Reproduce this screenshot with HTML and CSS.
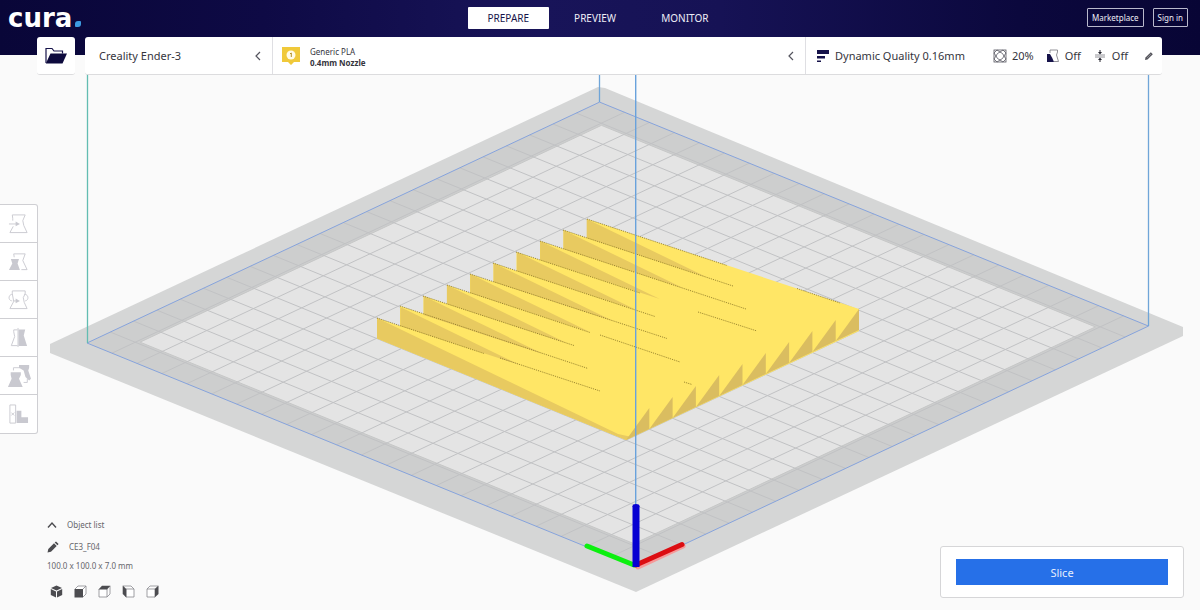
FILE: index.html
```html
<!DOCTYPE html>
<html lang="en">
<head>
<meta charset="utf-8">
<meta name="viewport" content="width=device-width, initial-scale=1">
<title>CE3_F04 - Cura</title>
<link rel="stylesheet" href="styles.css">
</head>
<body>
<div class="app">
  <svg class="scene" viewBox="0 0 1200 610" preserveAspectRatio="xMidYMid slice" role="img" aria-label="Build plate with model">
    <polygon points="598,87 605,88 1183,327 1183,336 636,592 50,353 50,344" fill="#d5d6d6"/>
    <!-- build plate: one unit is one 10 mm grid cell -->
    <g transform="matrix(24.95 10.18 23.3 -10.95 87 343)">
      <rect width="22" height="22" fill="#cdcece"/>
      <rect class="hair" x="1.1" y="1.1" width="19.8" height="19.8" fill="#e4e4e4" stroke="#c6c7c7"/>
      <path class="hair" stroke="#c1c2c4" fill="none" d="M0 1H22M0 2H22M0 3H22M0 4H22M0 5H22M0 6H22M0 7H22M0 8H22M0 9H22M0 10H22M0 11H22M0 12H22M0 13H22M0 14H22M0 15H22M0 16H22M0 17H22M0 18H22M0 19H22M0 20H22M0 21H22M1 0V22M2 0V22M3 0V22M4 0V22M5 0V22M6 0V22M7 0V22M8 0V22M9 0V22M10 0V22M11 0V22M12 0V22M13 0V22M14 0V22M15 0V22M16 0V22M17 0V22M18 0V22M19 0V22M20 0V22M21 0V22"/>
      <rect class="hair" width="22" height="22" fill="none" stroke="#86a3dc"/>
    </g>
    <path d="M87.500 60V343" stroke="#62bdb2" stroke-width="1.300" fill="none"/>
    <path d="M599.500 60V102M1148.500 60V326" stroke="#6fa5d8" stroke-width="1.300" fill="none"/>
    <!-- model -->
    <polygon fill="#ffe666" points="377,318 400,326 400,306 423.500,314 423.500,296 447,304 447,285 470,293 470,274 493.500,282 493.500,263 516.500,271 516.500,252 540,260 540,241 563.500,249 563.500,230 587,238 587,219 859,309 859,331 626,440 377,338.500"/>
    <g fill="#e8ca60">
      <polygon points="377,318 377,338.500 626,440 632,437 618,434"/>
      <polygon id="fin" points="400.300,307 400.300,326 520,365"/>
      <use href="#fin" x="23.300" y="-11"/>
      <use href="#fin" x="46.600" y="-22"/>
      <use href="#fin" x="69.900" y="-33"/>
      <use href="#fin" x="93.200" y="-44"/>
      <use href="#fin" x="116.500" y="-55"/>
      <use href="#fin" x="139.800" y="-66"/>
      <use href="#fin" x="163.100" y="-77"/>
      <use href="#fin" x="186.400" y="-88"/>
    </g>
    <g fill="#dabd60">
      <polygon id="tooth" points="649.300,408 649.300,429 626,440"/>
      <use href="#tooth" x="23.300" y="-11"/>
      <use href="#tooth" x="46.600" y="-22"/>
      <use href="#tooth" x="69.900" y="-33"/>
      <use href="#tooth" x="93.200" y="-44"/>
      <use href="#tooth" x="116.500" y="-55"/>
      <use href="#tooth" x="139.800" y="-66"/>
      <use href="#tooth" x="163.100" y="-77"/>
      <use href="#tooth" x="186.400" y="-88"/>
      <use href="#tooth" x="209.700" y="-99"/>
    </g>
    <path fill="none" stroke="#7d6a1d" stroke-width="0.800" stroke-dasharray="1 1" d="M377 318L484 353.500M500 358L600 391M400 306L588 368.500M423 296L574 345.500M447 285L590 332.500M600 335L680 362M470 274L667 338.500M493 263L655 316.500M516 252L640 293M540 241L746 309M563 230L733 286M587 219L727 265.500M797 288.500L840 303M698 312L757 331M684 382L692 384.500"/>
    <path d="M635.700 60V510" stroke="#69a2dc" stroke-width="1.400" fill="none"/>
    <g stroke-width="5" stroke-linecap="round">
      <path d="M638 567L683 546" stroke="#f59a9a"/>
      <path d="M636 565L682 544.500" stroke="#dc0d12"/>
      <path d="M634 565L587 546" stroke="#0cf00f"/>
    </g>
    <path d="M636 506V567" stroke="#0700d2" stroke-width="7"/>
    <ellipse cx="636" cy="506" rx="3.500" ry="2" fill="#0700d2"/>
  </svg>

  <header class="header">
    <div class="titlebar">
      <div class="logo">cura<span class="logo-dot"></span></div>
      <nav class="tabs" aria-label="Stages">
        <button class="tab tab-active">PREPARE</button>
        <button class="tab">PREVIEW</button>
        <button class="tab">MONITOR</button>
      </nav>
      <div class="account">
        <button class="outline-button">Marketplace</button>
        <button class="outline-button">Sign in</button>
      </div>
    </div>
    <div class="stagebar">
      <button class="open-file" aria-label="Open file">
        <svg width="24" height="20" viewBox="0 0 24 20"><path d="M2 17V2.500H8L10 5H18.500V7.500" fill="none" stroke="#16134a" stroke-width="1.200"/><path d="M6.500 7.500H23L18.500 17.500H1.800Z" fill="#0d0a3d"/></svg>
      </button>
      <div class="settings">
        <button class="segment machine"><span>Creality Ender-3</span>
          <svg class="chevron" width="8" height="10" viewBox="0 0 8 10"><path d="M6 1L2 5L6 9"/></svg>
        </button>
        <button class="segment material">
          <svg width="20" height="20" viewBox="0 0 20 20"><path d="M1 1H19V16H13L10 19L7 16H1Z" fill="#f0c93a"/><circle cx="10" cy="9" r="4.500" fill="#fffbe8"/><path d="M9 7.800L10.300 7V11" fill="none" stroke="#b3912a"/></svg>
          <span class="material-text"><span>Generic PLA</span><strong>0.4mm Nozzle</strong></span>
          <svg class="chevron" width="8" height="10" viewBox="0 0 8 10"><path d="M6 1L2 5L6 9"/></svg>
        </button>
        <button class="segment profile">
          <svg width="14" height="14" viewBox="0 0 14 14"><path d="M1 1H13V5H1ZM1 7H9V9.500H1ZM1 11.500H5V13H1Z" fill="#16134a"/></svg>
          <span class="profile-name">Dynamic Quality 0.16mm</span>
          <span class="summary">
            <svg width="14" height="14" viewBox="0 0 14 14" fill="none" stroke="#55555f" stroke-width="0.800"><rect x="1" y="1" width="12" height="12"/><path d="M1 4L4 1M10 1L13 4M1 10L4 13M10 13L13 10M4 1L7 3L10 1M4 13L7 11L10 13M1 4L3 7L1 10M13 4L11 7L13 10M4.500 4.500L7 3L9.500 4.500L11 7L9.500 9.500L7 11L4.500 9.500L3 7Z"/></svg>
            <span>20%</span>
          </span>
          <span class="summary">
            <svg width="14" height="14" viewBox="0 0 14 14"><path d="M1 5H4L6 8.500L8 13H1Z" fill="#16134a"/><path d="M4 4V1H11.500V3L10.500 6L12.500 12.500H8" fill="none" stroke="#77777f" stroke-width="0.800"/></svg>
            <span>Off</span>
          </span>
          <span class="summary">
            <svg width="14" height="14" viewBox="0 0 14 14"><path d="M2 6H12M2 8H12" stroke="#77777f" stroke-width="0.800"/><path d="M7 1V4M7 13V10" stroke="#22222c"/><path d="M5 3H9L7 5.500ZM5 11H9L7 8.500Z" fill="#22222c"/></svg>
            <span>Off</span>
          </span>
          <svg class="edit" width="10" height="10" viewBox="0 0 10 10"><path d="M1 9L1.500 6.500L6.800 1.200L8.800 3.200L3.500 8.500Z" fill="#55555c"/><path d="M3 7L7 3" stroke="#aaaab0" stroke-width="0.600"/></svg>
        </button>
      </div>
    </div>
  </header>

  <main class="workspace">
    <div class="toolbar" role="toolbar" aria-label="Tools">
      <button aria-label="Move" disabled><svg viewBox="0 0 22 22"><path class="line" d="M5 8V6L4.500 2H18L15.500 8L16.500 13L20 20.500H2L5.500 14M1 11.500H9"/><path class="fill" d="M8 9L12.500 11.500L8 14Z"/></svg></button>
      <button aria-label="Scale" disabled><svg viewBox="0 0 22 22"><path class="line" d="M6.500 6.500L6 3H18L15.500 10L20 19.500H14"/><path class="fill" d="M3 8.500H11.500L10 13L12.500 20H1L4.500 13Z"/></svg></button>
      <button aria-label="Rotate" disabled><svg viewBox="0 0 22 22"><path class="line" d="M4.500 5V2H18V5L16 9L17 14L20 20.500H2L6 13L4.500 5M5 5.500C0 5.500 0 12 4 12.500M17 5.500C22 5.500 22 12 18 12.500M5 12.500H9"/><path class="fill" d="M8 10L12.500 12.500L8 15Z"/></svg></button>
      <button aria-label="Mirror" disabled><svg viewBox="0 0 22 22"><path class="line" d="M10 3H6V5L7 10L3.500 19.500H10M10.500 1V21"/><path class="fill" d="M11 2.500H18L16.500 9L20 20H11Z"/></svg></button>
      <button aria-label="Per model settings" disabled><svg viewBox="0 0 26 26"><path class="line" d="M7 7V4H14M18 20H22V16"/><path class="fill" d="M4 9H15V12L13 16L17 25H1L5 16L4 12ZM13 1H24V4L23 7L26 16L24 18L20 14L18 7L13 4Z"/></svg></button>
      <button aria-label="Support blocker" disabled><svg viewBox="0 0 22 22"><path class="line" d="M2 1H8V20H2ZM3.500 9L6.500 12M6.500 9L3.500 12"/><path class="fill" d="M9 7H14V14H21V20H9Z"/></svg></button>
    </div>

    <footer class="bottom">
      <section class="objects">
        <button class="object-row muted"><svg width="10" height="8" viewBox="0 0 10 8"><path d="M1 6.500L5 2L9 6.500" fill="none" stroke="#4c4c50" stroke-width="1.400"/></svg><span>Object list</span></button>
        <button class="object-row name"><svg width="12" height="12" viewBox="0 0 12 12"><path d="M0.500 11.500L1.300 8L7 2.300L9.700 5L4 10.700ZM7.700 1.600L9 0.400L11.600 3L10.400 4.300Z" fill="#4c4c50"/></svg><span>CE3_F04</span></button>
        <p class="dimensions">100.0 x 100.0 x 7.0 mm</p>
        <div class="views">
          <button aria-label="3D view"><svg viewBox="0 0 13 13"><path d="M6.500 0.500L12 3L6.500 5.500L1 3ZM0.800 4L6 6.400V12.500L0.800 10ZM12.200 4L7 6.400V12.500L12.200 10Z" fill="#4c4c50"/></svg></button>
          <button aria-label="Front view"><svg viewBox="0 0 13 13"><path class="cube" d="M1 4L4 1H12V9L9 12M9 4L12 1"/><path d="M0.500 4H9V12.500H0.500Z" fill="#4c4c50"/></svg></button>
          <button aria-label="Top view"><svg viewBox="0 0 13 13"><path class="cube" d="M1 4V12H9V4M9 12L12 9V1"/><path d="M0.500 4.500L4 0.800H12.500L9 4.500Z" fill="#4c4c50"/></svg></button>
          <button aria-label="Left view"><svg viewBox="0 0 13 13"><path class="cube" d="M1 1H9L12 4V12H4V4H12"/><path d="M0.700 0.500L4.300 4V12.500L0.700 9Z" fill="#4c4c50"/></svg></button>
          <button aria-label="Right view"><svg viewBox="0 0 13 13"><path class="cube" d="M9 4H1V12H9M1 4L4 1H12"/><path d="M8.700 4L12.500 0.500V9L8.700 12.500Z" fill="#4c4c50"/></svg></button>
        </div>
      </section>
      <div class="action-panel"><button class="slice">Slice</button></div>
    </footer>
  </main>
</div>
</body>
</html>
```
FILE: styles.css
```css
* { box-sizing: border-box; }

body {
  margin: 0;
  background: #fafafa;
  color: #35353d;
  font-family: "Noto Sans", "Open Sans", sans-serif;
  font-size: 11px;
}

button {
  margin: 0;
  padding: 0;
  border: 0;
  background: none;
  color: inherit;
  font: inherit;
  text-align: left;
}

svg { display: block; flex: none; }

.app {
  position: relative;
  display: flex;
  flex-direction: column;
  min-height: 100vh;
}

/* 3D viewport lies behind all of the controls */
.scene {
  position: absolute;
  inset: 0;
  width: 100%;
  height: 100%;
}

.hair { vector-effect: non-scaling-stroke; stroke-width: 1px; }

.header {
  position: relative;
  background: linear-gradient(90deg, #090638 0%, #0e0a45 22%, #181459 45%, #161255 60%, #0b083d 85%, #080535 100%) no-repeat;
  background-size: 100% 55px;
}

.titlebar {
  display: grid;
  grid-template-columns: 1fr auto 1fr;
  align-items: center;
  height: 37px;
  padding: 0 12px 2px 8px;
}

.logo {
  display: flex;
  align-items: baseline;
  gap: 3px;
  color: #fff;
  font: bold 26px/32px "DejaVu Sans", sans-serif;
}

.logo-dot {
  width: 6px;
  height: 6px;
  border-radius: 3px 1px 3px 1px;
  background: #3d9be0;
}

.tabs { display: flex; gap: 5px; }

.tab {
  height: 22px;
  padding: 0 20px;
  color: #eeeef6;
  font-size: 10px;
}

.tab-active { background: #fff; color: #16134a; border-radius: 1px; }

.account {
  display: flex;
  justify-content: flex-end;
  gap: 9px;
}

.outline-button {
  height: 19px;
  padding: 0 4px;
  border: 1px solid #b9b9cc;
  border-radius: 1px;
  color: #eeeef6;
  font-size: 8px;
}

.stagebar {
  display: flex;
  gap: 10px;
  padding: 0 38px 0 37px;
}

.open-file, .settings {
  height: 38px;
  border-radius: 3px;
  background: #fff;
  border-bottom: 1px solid #dcdcde;
}

.open-file {
  display: grid;
  place-items: center;
  width: 38px;
}

.settings { display: flex; flex: 1; }

.segment {
  display: flex;
  align-items: center;
  border-right: 1px solid #dfdfe3;
}

.segment:last-child { border-right: 0; }

.machine { width: 188px; padding: 0 10px 0 14px; }
.material { flex: 1; gap: 9px; padding: 0 10px 0 8px; }
.profile { width: 356px; padding: 0 8px 0 10px; }

.chevron {
  margin-left: auto;
  fill: none;
  stroke: #55555f;
  stroke-width: 1.2;
}

.material-text {
  display: flex;
  flex-direction: column;
  padding-top: 2px;
  font-size: 8px;
  line-height: 11px;
}

.profile-name { flex: 1; margin-left: 5px; }

.summary {
  display: flex;
  align-items: center;
  gap: 5px;
  margin-right: 12px;
}

.edit { margin-left: 4px; }

.workspace {
  position: relative;
  display: flex;
  flex: 1;
  flex-direction: column;
  justify-content: space-between;
  padding: 129px 16px 12px 0;
}

.toolbar {
  display: flex;
  flex-direction: column;
  align-self: flex-start;
  width: 38px;
  border: 1px solid #cfcfd3;
  border-left: 0;
  border-radius: 0 3px 3px 0;
  background: #fff;
}

.toolbar button {
  display: grid;
  place-items: center;
  height: 38px;
  border-bottom: 1px solid #cfcfd3;
}

.toolbar button:last-child { border-bottom: 0; }
.toolbar svg { width: 21px; height: 21px; }
.toolbar button:nth-child(5) svg { width: 24px; height: 24px; }
.line { fill: none; stroke: #cbcbd1; stroke-width: 1; }
.fill { fill: #c9c9d0; }

.bottom {
  display: flex;
  align-items: flex-end;
  justify-content: space-between;
}

.objects {
  display: flex;
  flex-direction: column;
  padding-left: 47px;
  color: #66666b;
  font-size: 8px;
  line-height: 12px;
}

.object-row {
  display: flex;
  align-items: center;
  gap: 10px;
  margin-bottom: 10px;
}

.name { margin-bottom: 7px; }
.dimensions { margin: 0 0 13px; }

.views {
  display: flex;
  gap: 11px;
  padding-left: 3px;
}

.views svg { width: 13px; height: 13px; }
.cube { fill: #fff; stroke: #88888e; stroke-width: 0.8; }

.action-panel {
  width: 244px;
  padding: 12px 15px;
  border: 1px solid #d6d6d8;
  border-radius: 3px;
  background: #fff;
}

.slice {
  width: 100%;
  height: 26px;
  background: #2670e8;
  color: #e6effd;
  font-size: 11px;
  text-align: center;
}
```
